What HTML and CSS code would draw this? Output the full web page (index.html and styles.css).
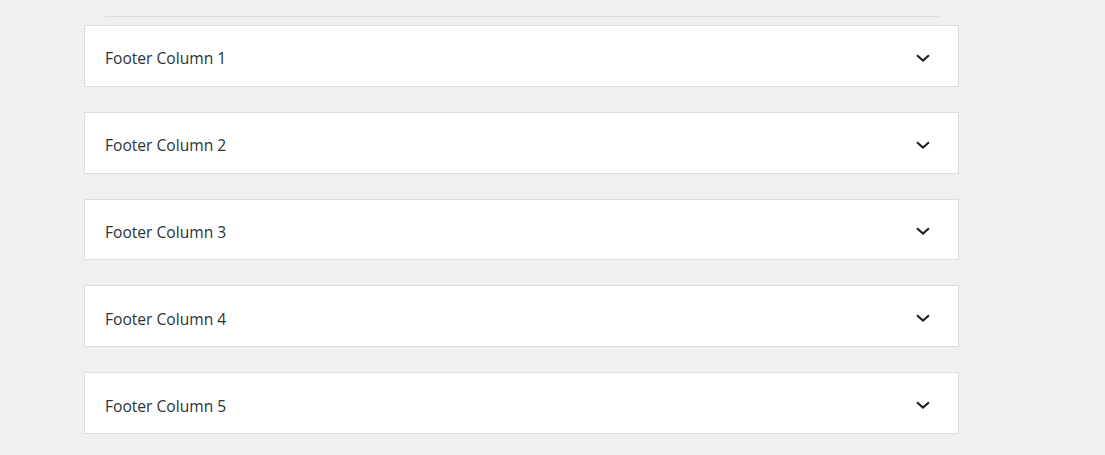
FILE: index.html
```html
<!DOCTYPE html>
<html lang="en">
<head>
    <meta charset="UTF-8">
    <title>Footer Columns</title>
    <link rel="stylesheet" href="styles.css">
</head>
<body>
    <div class="panels">
        <hr class="divider">

        <div class="panel">
            <span class="panel-title">Footer Column 1</span>
            <svg class="chevron" width="14" height="8" viewBox="0 0 14 8"><path d="M1 1.2 L7 6.6 L13 1.2" fill="none" stroke="#1e1e1e" stroke-width="2"/></svg>
        </div>
        <div class="panel">
            <span class="panel-title">Footer Column 2</span>
            <svg class="chevron" width="14" height="8" viewBox="0 0 14 8"><path d="M1 1.2 L7 6.6 L13 1.2" fill="none" stroke="#1e1e1e" stroke-width="2"/></svg>
        </div>
        <div class="panel">
            <span class="panel-title">Footer Column 3</span>
            <svg class="chevron" width="14" height="8" viewBox="0 0 14 8"><path d="M1 1.2 L7 6.6 L13 1.2" fill="none" stroke="#1e1e1e" stroke-width="2"/></svg>
        </div>
        <div class="panel">
            <span class="panel-title">Footer Column 4</span>
            <svg class="chevron" width="14" height="8" viewBox="0 0 14 8"><path d="M1 1.2 L7 6.6 L13 1.2" fill="none" stroke="#1e1e1e" stroke-width="2"/></svg>
        </div>
        <div class="panel">
            <span class="panel-title">Footer Column 5</span>
            <svg class="chevron" width="14" height="8" viewBox="0 0 14 8"><path d="M1 1.2 L7 6.6 L13 1.2" fill="none" stroke="#1e1e1e" stroke-width="2"/></svg>
        </div>
    </div>
</body>
</html>
```

FILE: styles.css
```css
body {
    margin: 0;
    background-color: #f0f0f0;
    font-family: 'Open Sans', 'Noto Sans', sans-serif;
}
.panels {
    width: 875px;
    margin-left: 84px;
    padding-top: 16px;
    display: flex;
    flex-direction: column;
    gap: 25px;
}
.divider {
    margin: 0 20px 0 21px;
    border: none;
    border-top: 1px solid #dcdcde;
    height: 0;
    margin-bottom: -17px;
}
.panel {
    box-sizing: border-box;
    height: 61.8px;
    background-color: #fff;
    border: 1px solid #dcdcde;
    display: flex;
    align-items: center;
    justify-content: space-between;
    padding: 0 28px 0 20px;
}
.panel-title {
    font-size: 15.6px;
    color: #2c3338;
    margin-top: 5px;
}
.chevron {
    display: block;
    margin-top: 4px;
}
```
